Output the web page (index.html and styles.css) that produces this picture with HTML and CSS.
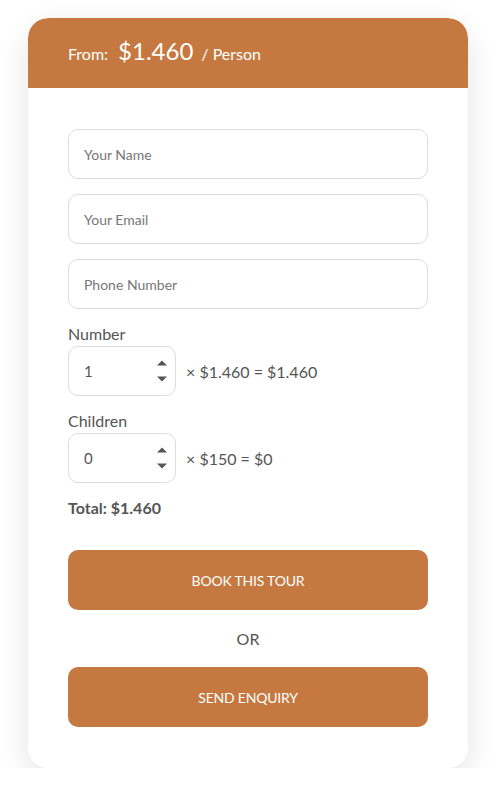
FILE: index.html
```html
<!DOCTYPE html>
<html>
<head>
<meta charset="utf-8">
<link rel="stylesheet" href="styles.css">
</head>
<body>
<div class="card">
  <div class="head">
    <span class="from">From:</span>
    <span class="price">$1.460</span>
    <span class="per">/ Person</span>
  </div>
  <div class="body">
    <div class="field">Your Name</div>
    <div class="field">Your Email</div>
    <div class="field">Phone Number</div>
    <div class="group">
      <div class="label">Number</div>
      <div class="qty-row">
        <div class="qty">
          <span>1</span>
          <svg class="spin" width="12" height="24" viewBox="0 0 12 24"><path d="M1 6.5 L6 1.5 L11 6.5 Z" fill="#555"/><path d="M1 17.5 L11 17.5 L6 22.5 Z" fill="#555"/></svg>
        </div>
        <span class="calc">× $1.460 = $1.460</span>
      </div>
    </div>
    <div class="group">
      <div class="label">Children</div>
      <div class="qty-row">
        <div class="qty">
          <span>0</span>
          <svg class="spin" width="12" height="24" viewBox="0 0 12 24"><path d="M1 6.5 L6 1.5 L11 6.5 Z" fill="#555"/><path d="M1 17.5 L11 17.5 L6 22.5 Z" fill="#555"/></svg>
        </div>
        <span class="calc">× $150 = $0</span>
      </div>
    </div>
    <div class="total">Total: $1.460</div>
    <div class="btn">BOOK THIS TOUR</div>
    <div class="or">OR</div>
    <div class="btn">SEND ENQUIRY</div>
  </div>
</div>
</body>
</html>
```
FILE: styles.css
```css
* { box-sizing: border-box; }
html, body { margin: 0; padding: 0; background: #fff; }
body {
  font-family: "Lato", "Open Sans", sans-serif;
  color: #555;
  padding: 18px 29px 0 28px;
}
.card {
  width: 440px;
  height: 750px;
  background: #fff;
  border-radius: 20px;
  box-shadow: 0 10px 30px rgba(0,0,0,0.11);
  overflow: hidden;
}
.head {
  height: 70px;
  background: #C57940;
  color: #fff;
  display: flex;
  align-items: baseline;
  padding: 18px 40px 0;
  border-radius: 20px 20px 0 0;
}
.from { font-size: 16px; margin-right: 10px; }
.price { font-size: 24px; margin-right: 8px; }
.per { font-size: 16px; }
.body {
  padding: 41px 40px 40px;
  display: flex;
  flex-direction: column;
}
.field {
  height: 50px;
  border: 1px solid #dcdcdc;
  border-radius: 10px;
  padding: 0 15px;
  display: flex;
  align-items: center;
  font-size: 14px;
  color: #777;
  margin-bottom: 15px;
}
.group { display: flex; flex-direction: column; }
.label { font-size: 16px; line-height: 20px; margin-bottom: 2px; }
.qty-row { display: flex; align-items: center; margin-bottom: 15px; }
.qty {
  width: 108px;
  height: 50px;
  border: 1px solid #dcdcdc;
  border-radius: 10px;
  display: flex;
  align-items: center;
  justify-content: space-between;
  padding: 0 7px 0 15px;
  font-size: 15px;
  color: #555;
}
.spin { display: block; }
.calc { font-size: 16px; margin-left: 10px; }
.total { font-size: 16px; font-weight: 700; margin-bottom: 32px; line-height: 20px; }
.btn {
  height: 60px;
  background: #C57940;
  color: #fff;
  border-radius: 10px;
  display: flex;
  align-items: center;
  justify-content: center;
  font-size: 14px;
  letter-spacing: -0.2px;
}
.or {
  text-align: center;
  font-size: 16px;
  line-height: 20px;
  padding: 19px 0 18px;
}
```
